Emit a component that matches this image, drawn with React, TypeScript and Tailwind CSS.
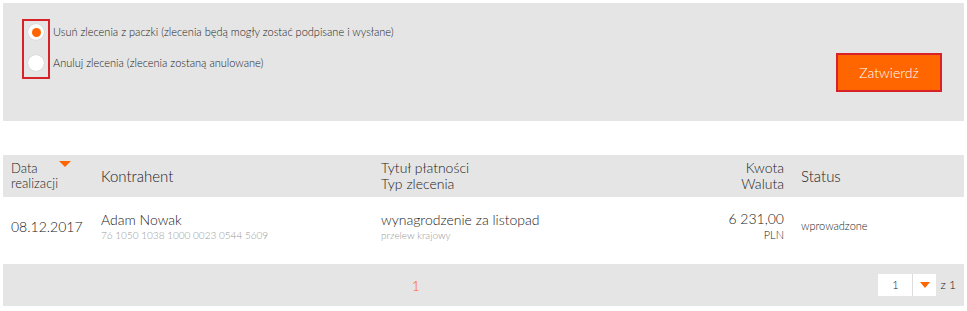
import React, { useState } from 'react';

const font = { fontFamily: 'Lato, "Open Sans", sans-serif' };

const Radio = ({ checked, onClick }: { checked: boolean; onClick: () => void }) => (
  <button
    onClick={onClick}
    className="h-[16px] w-[16px] rounded-full bg-white flex items-center justify-center shadow-[0_0_1px_rgba(0,0,0,0.25)]"
  >
    {checked && <span className="h-[9px] w-[9px] rounded-full bg-[#ff6600]" />}
  </button>
);

export default function App() {
  const [choice, setChoice] = useState<'remove' | 'cancel'>('remove');

  return (
    <div className="w-[967px] h-[311px] bg-white pt-[3px] px-[3px] text-[#222] font-light" style={font}>
      {/* Options panel */}
      <div className="h-[118px] bg-[#e5e5e5] flex">
        <div className="pl-[19px] pt-[16px]">
          <div className="flex">
            <div className="border-2 border-[#d8222a] w-[28px] h-[60px] flex flex-col items-center pt-[3px] gap-[15px]">
              <Radio checked={choice === 'remove'} onClick={() => setChoice('remove')} />
              <Radio checked={choice === 'cancel'} onClick={() => setChoice('cancel')} />
            </div>
            <div className="flex flex-col ml-[3px] pt-[5px] gap-[15px] text-[11px] leading-[16px]">
              <span>Usuń zlecenia z paczki (zlecenia będą mogły zostać podpisane i wysłane)</span>
              <span>Anuluj zlecenia (zlecenia zostaną anulowane)</span>
            </div>
          </div>
        </div>
        <div className="ml-auto mr-[22px] pt-[50px]">
          <button className="w-[106px] h-[39px] border-2 border-[#d8222a] bg-[#ff6600] text-white text-[14px] font-light">
            Zatwierdź
          </button>
        </div>
      </div>

      {/* Table */}
      <div className="mt-[34px]">
        <div className="h-[42px] bg-[#e5e5e5] flex items-center">
          <div className="w-[98px] pl-[8px] relative text-[13px] leading-[15px]">
            <div>Data</div>
            <div>realizacji</div>
            <span className="absolute left-[56px] top-[0px] w-0 h-0 border-l-[6px] border-r-[6px] border-t-[6px] border-l-transparent border-r-transparent border-t-[#ff6600]" />
          </div>
          <div className="w-[280px] text-[15px]">Kontrahent</div>
          <div className="w-[300px] text-[14px] leading-[16px]">
            <div>Tytuł płatności</div>
            <div>Typ zlecenia</div>
          </div>
          <div className="w-[103px] text-right text-[14px] leading-[16px]">
            <div>Kwota</div>
            <div>Waluta</div>
          </div>
          <div className="pl-[17px] text-[15px]">Status</div>
        </div>
        <div className="h-[58px] flex items-center">
          <div className="w-[98px] pl-[8px] text-[14px]">08.12.2017</div>
          <div className="w-[280px]">
            <div className="text-[14px] leading-[17px]">Adam Nowak</div>
            <div className="text-[10px] leading-[14px] text-[#999]">76 1050 1038 1000 0023 0544 5609</div>
          </div>
          <div className="w-[300px]">
            <div className="text-[14px] leading-[17px]">wynagrodzenie za listopad</div>
            <div className="text-[10px] leading-[14px] text-[#999]">przelew krajowy</div>
          </div>
          <div className="w-[103px] text-right">
            <div className="text-[14px] leading-[17px]">6 231,00</div>
            <div className="text-[11px] leading-[16px]">PLN</div>
          </div>
          <div className="pl-[17px] text-[11px]">wprowadzone</div>
        </div>
      </div>

      {/* Pagination */}
      <div className="mt-[9px] h-[42px] bg-[#e5e5e5] flex items-center">
        <div className="flex-1 flex justify-center pr-[50px]">
          <span className="text-[#ff6600] text-[14px]">1</span>
        </div>
        <div className="flex items-center mr-[8px]">
          <div className="flex h-[22px] bg-white">
            <div className="w-[34px] flex items-center justify-center text-[11px]">1</div>
            <div className="w-[24px] border-l border-[#ddd] flex items-center justify-center">
              <span className="w-0 h-0 border-l-[5px] border-r-[5px] border-t-[6px] border-l-transparent border-r-transparent border-t-[#ff6600]" />
            </div>
          </div>
          <span className="ml-[4px] text-[12px]">z 1</span>
        </div>
      </div>
    </div>
  );
}
